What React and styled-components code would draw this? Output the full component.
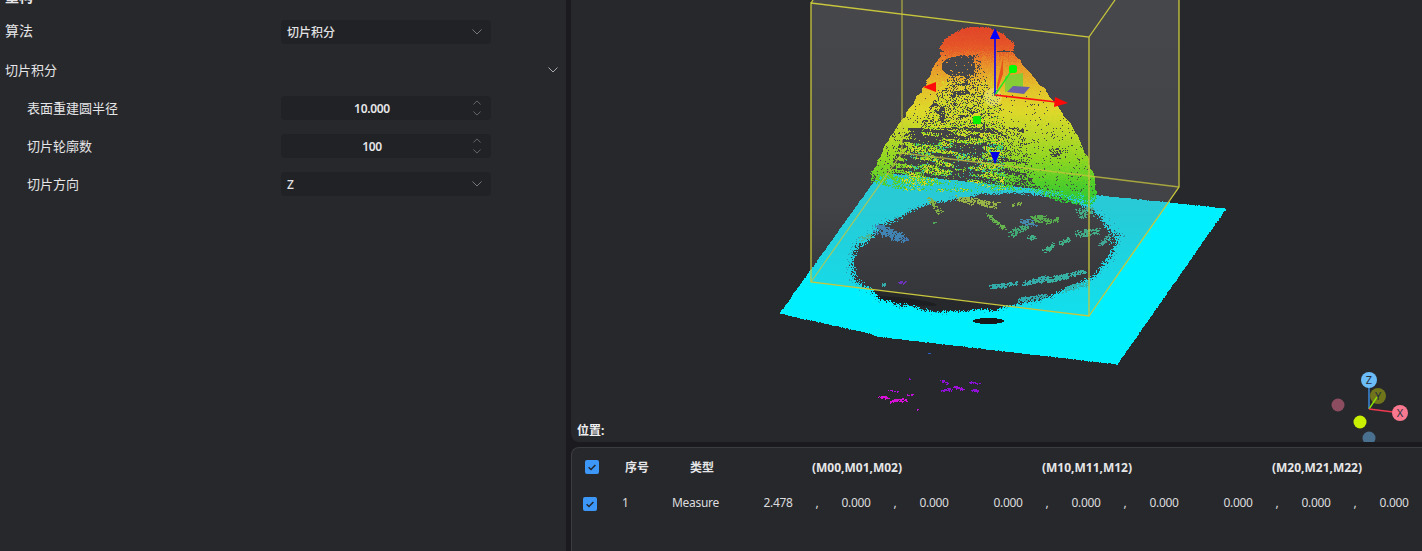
import React from "react";
import styled, { createGlobalStyle } from "styled-components";

const GlobalStyles = createGlobalStyle`
  html, body {
    margin: 0;
    padding: 0;
    background: #1b1b1f;
    overflow: hidden;
  }
  body {
    font-family: "Noto Sans", "Noto Sans CJK SC", sans-serif;
    color: #e4e4e6;
  }
`;

// ---- point cloud generator, seeded so that every run draws the same picture ----

function seeded(a) {
  return () => {
    a = (a + 0x6d2b79f5) | 0;
    let t = Math.imul(a ^ (a >>> 15), 1 | a);
    t = (t + Math.imul(t ^ (t >>> 7), 61 | t)) ^ t;
    return ((t ^ (t >>> 14)) >>> 0) / 4294967296;
  };
}

const hash = (x, y) => {
  const s = Math.sin(x * 127.1 + y * 311.7) * 43758.5453;
  return s - Math.floor(s);
};

function noise(x, y) {
  const ix = Math.floor(x);
  const iy = Math.floor(y);
  const fx = x - ix;
  const fy = y - iy;
  const u = fx * fx * (3 - 2 * fx);
  const v = fy * fy * (3 - 2 * fy);
  const a = hash(ix, iy) * (1 - u) + hash(ix + 1, iy) * u;
  const b = hash(ix, iy + 1) * (1 - u) + hash(ix + 1, iy + 1) * u;
  return a * (1 - v) + b * v;
}

function lerpTable(table, v) {
  if (v <= table[0][0]) return table[0][1];
  for (let i = 1; i < table.length; i++) {
    if (v <= table[i][0]) {
      const [a, av] = table[i - 1];
      const [b, bv] = table[i];
      return av + ((bv - av) * (v - a)) / (b - a);
    }
  }
  return table[table.length - 1][1];
}

function inPolygon(x, y, poly) {
  let inside = false;
  for (let i = 0, j = poly.length - 1; i < poly.length; j = i++) {
    const [xi, yi] = poly[i];
    const [xj, yj] = poly[j];
    if (yi > y !== yj > y && x < ((xj - xi) * (y - yi)) / (yj - yi) + xi) inside = !inside;
  }
  return inside;
}

class Layer {
  constructor() {
    this.byColor = new Map();
  }
  put(x, y, color) {
    if (!this.byColor.has(color)) this.byColor.set(color, new Set());
    this.byColor.get(color).add(Math.round(y) * 4000 + Math.round(x));
  }
  paths() {
    const out = [];
    this.byColor.forEach((set, color) => {
      const keys = Array.from(set).sort((a, b) => a - b);
      let d = "";
      let i = 0;
      while (i < keys.length) {
        let j = i;
        while (j + 1 < keys.length && keys[j + 1] === keys[j] + 1) j++;
        const y = Math.floor(keys[i] / 4000);
        const x = keys[i] - y * 4000;
        d += `M${x} ${y}h${j - i + 1}v1h-${j - i + 1}z`;
        i = j + 1;
      }
      out.push({ color, d });
    });
    return out;
  }
}

const HEIGHT_STOPS = [
  [28, [226, 70, 40]],
  [48, [230, 88, 40]],
  [62, [232, 140, 42]],
  [85, [228, 190, 42]],
  [110, [222, 216, 42]],
  [135, [186, 216, 40]],
  [160, [140, 214, 34]],
  [185, [78, 204, 42]],
  [208, [30, 200, 60]],
];

function heightColor(y) {
  const q = Math.max(28, Math.min(208, Math.round(y / 5) * 5));
  for (let i = 1; i < HEIGHT_STOPS.length; i++) {
    const [a, ca] = HEIGHT_STOPS[i - 1];
    const [b, cb] = HEIGHT_STOPS[i];
    if (q <= b) {
      const t = (q - a) / (b - a);
      const c = ca.map((v, k) => Math.round(v + (cb[k] - v) * t));
      return `rgb(${c[0]},${c[1]},${c[2]})`;
    }
  }
  return "rgb(30,200,60)";
}

const CONE_LEFT = [[52, 941], [87, 923], [110, 908], [147, 883], [173, 871], [190, 872]];
const CONE_RIGHT = [[52, 1013], [100, 1053], [130, 1075], [157, 1087], [175, 1093], [205, 1098]];
const CONE_BOTTOM = [[870, 182], [900, 190], [960, 192], [1030, 190], [1060, 202], [1090, 206], [1100, 194]];
const CAP = [
  [960, 29], [972, 26], [988, 27], [1002, 33], [1014, 43], [1013, 51], [1003, 50], [985, 54],
  [965, 55], [946, 55], [939, 47], [945, 38],
];
const PLATE = [[880, 172], [1226, 208], [1117, 364], [875, 336], [873, 334], [779, 313]];

// island coordinates are read from a 3x crop whose corner is (770,170)
const ISLANDS = [
  [660, 350, 740, 338, 4, "#22b8b4", 110],
  [755, 342, 830, 322, 5, "#22b8b4", 130],
  [830, 330, 895, 315, 5, "#24bfae", 130],
  [905, 312, 945, 302, 4, "#24bfae", 65],
  [880, 358, 950, 338, 5, "#22c0b8", 110],
  [745, 388, 830, 376, 4, "#1fb4b8", 100],
  [650, 130, 700, 175, 3, "#5ecb3a", 70],
  [720, 192, 765, 170, 6, "#2cbb72", 90],
  [752, 152, 792, 160, 6, "#2f8fc0", 60],
  [790, 145, 830, 145, 7, "#48c23a", 90],
  [830, 158, 860, 146, 4, "#48c23a", 40],
  [772, 202, 796, 202, 4, "#2cc08a", 35],
  [822, 242, 852, 222, 4, "#2cc08a", 45],
  [870, 220, 895, 205, 4, "#2cc08a", 40],
  [920, 190, 985, 182, 7, "#2cc08a", 90],
  [925, 130, 960, 125, 9, "#2cc08a", 80],
  [990, 225, 1015, 195, 5, "#2cb8a0", 45],
  [560, 85, 680, 105, 6, "#a6cf2c", 170],
  [475, 85, 510, 130, 5, "#86cc2c", 60],
  [725, 105, 752, 98, 3, "#86cc2c", 22],
  [335, 342, 345, 342, 2, "#22b8b4", 14],
  [270, 205, 305, 195, 4, "#3cc89a", 40],
  [385, 336, 410, 336, 2, "#6a20c8", 20],
  [490, 156, 498, 156, 1, "#3cb848", 6],
];
const BLUE_PATCH = [
  [318, 172, 395, 205, 9, "#2a88c8", 260],
  [400, 205, 415, 208, 3, "#2a70c0", 14],
];
const STRAY = [
  [325, 680, 355, 682, 2, "#d810d8", 30],
  [360, 692, 412, 688, 3, "#d810d8", 55],
  [408, 675, 428, 672, 1, "#c010d8", 10],
  [510, 630, 530, 640, 2, "#9010d8", 20],
  [515, 660, 545, 656, 2, "#9010d8", 24],
  [548, 648, 580, 656, 2, "#a010d8", 28],
  [600, 634, 632, 642, 2, "#8a10d8", 16],
  [605, 660, 625, 660, 2, "#9010d8", 20],
  [355, 660, 380, 662, 1, "#b010d8", 5],
  [475, 548, 478, 550, 1, "#2a60c8", 3],
  [416, 625, 419, 627, 1, "#9010d8", 2],
  [440, 716, 446, 716, 1, "#c010d8", 3],
];

function buildCloud() {
  const rand = seeded(41);
  const plate = new Layer();
  const cone = new Layer();

  // flat table under the object, with the round footprint left empty
  for (let y = 172; y < 366; y++) {
    for (let x = 778; x < 1228; x++) {
      if (!inPolygon(x + (rand() - 0.5) * 0.8, y + (rand() - 0.5) * 0.8, PLATE)) continue;
      const rx = x - 984;
      const ry = y - 252;
      const u = rx * 0.9935 - ry * 0.114;
      const v = rx * 0.114 + ry * 0.9935;
      const wob = (noise(x / 14, y / 14) - 0.5) * 0.06;
      const dist = Math.sqrt((u / 132) ** 2 + (v / 58) ** 2) + wob;
      if (dist < 0.96) continue;
      if (dist < 1.02 && rand() > (dist - 0.96) / 0.06) continue;
      const blackA = ((x - 988) / 16) ** 2 + ((y - 320.5) / 3) ** 2;
      if (blackA < 1) continue;
      plate.put(x, y, dist < 1.05 && rand() < 0.08 ? "#14a8c0" : "#00f0ff");
    }
  }

  const scatter = (layer, list) => {
    list.forEach(([x1, y1, x2, y2, thick, color, count]) => {
      for (let i = 0; i < count; i++) {
        const t = rand();
        const x = 770 + (x1 + (x2 - x1) * t) / 3 + (rand() - 0.5) * thick;
        const y = 170 + (y1 + (y2 - y1) * t) / 3 + (rand() - 0.5) * thick;
        layer.put(x, y, color);
        if (rand() < 0.45) layer.put(x + 1, y, color);
        if (rand() < 0.25) layer.put(x, y + 1, color);
      }
    });
  };
  scatter(plate, ISLANDS);
  scatter(plate, BLUE_PATCH);
  scatter(plate, STRAY);

  // cone of the measured object, drawn pixel by pixel
  for (let y = 27; y < 207; y++) {
    const l = lerpTable(CONE_LEFT, y) + (noise(3, y / 4) - 0.5) * 3;
    const r = lerpTable(CONE_RIGHT, y) + (noise(9, y / 4) - 0.5) * 3;
    for (let x = 868; x < 1102; x++) {
      const jitter = (rand() - 0.5) * 9;
      if (y < 56 && inPolygon(x + (rand() - 0.5) * 1.5, y + (rand() - 0.5) * 1.5, CAP)) {
        cone.put(x, y, heightColor(y + jitter * 0.7));
        continue;
      }
      if (y < 52 || x < l || x > r) continue;
      const bottom = lerpTable(CONE_BOTTOM, x);
      if (y > bottom) continue;

      const t = (x - l) / (r - l);
      const n = noise(x / 6, y / 4);
      const band = noise(x / 15, (y - 0.13 * x) / 3.2);
      let p;
      if (y < 128) {
        if (t < 0.13 + (y < 90 ? 0.06 : 0)) p = 0.98;
        else if (t > 0.62) p = 0.97;
        else if (t > 0.5) p = 0.84;
        else p = n > 0.72 ? 0.1 : 0.74;
      } else {
        if (t < 0.07) p = 0.92;
        else if (t > 0.72) p = 0.95;
        else if (t > 0.52) p = band > 0.68 ? 0.25 : 0.78;
        else p = band > 0.56 ? 0.08 : 0.72;
      }
      if (x > 972 && y < 90 && t > 0.55) p = 1;
      const hollow = ((x - 958) / 17) ** 2 + ((y - 66) / 10) ** 2;
      if (hollow < 1) p = 0.04;
      const spot = ((x - 1055) / 6) ** 2 + ((y - 152) / 5) ** 2;
      if (spot < 1) p = 0.35;
      const fade = (bottom - y) / 12;
      if (fade < 1) p *= 0.45 + 0.55 * fade;
      if (rand() > p) continue;

      let color = heightColor(y + jitter);
      if (t > 0.14 && t < 0.6 && y > 80) {
        const pick = rand();
        if (y > 142 && band > 0.42 && pick < 0.4) color = "#30c8a0";
        else if (pick < 0.45) color = "#d8d62a";
        else if (y > 92 && y < 150 && pick < 0.76) color = heightColor(y + 32);
      }
      cone.put(x, y, color);
    }
  }

  return { plate: plate.paths(), cone: cone.paths() };
}

const CLOUD = buildCloud();

function Pixels({ items }) {
  return items.map((it) => <path key={it.color} d={it.d} fill={it.color} shapeRendering="crispEdges" />);
}

function SceneDrawing() {
  return (
    <SceneSvg viewBox="571 0 851 442" width="851" height="442">
      <defs>
        <linearGradient id="boxShade" x1="0" y1="0" x2="0" y2="316" gradientUnits="userSpaceOnUse">
          <stop offset="0" stopColor="#7a7a7f" stopOpacity="0.38" />
          <stop offset="0.65" stopColor="#7a7a7f" stopOpacity="0.32" />
          <stop offset="1" stopColor="#7a7a7f" stopOpacity="0.14" />
        </linearGradient>
      </defs>

      <ellipse cx="905" cy="301" rx="32" ry="3" fill="#1d1e21" transform="rotate(7 905 301)" />
      <ellipse cx="988" cy="320.5" rx="16" ry="3.5" fill="#17181a" />
      <Pixels items={CLOUD.plate} />
      <polygon points="811,3 813,0 1179,0 1179,187 1089,316 811,282" fill="url(#boxShade)" />
      <Pixels items={CLOUD.cone} />

      {/* bounding box */}
      <g stroke="#c8c63c" strokeWidth="1.3" fill="none">
        <path d="M902 0V153L811 282" opacity="0.75" />
        <path d="M902 153L1179 187" opacity="0.75" />
        <path d="M1179 0V187L1089 316" />
        <path d="M1115 0L1089 37" />
        <path d="M811 3H811L1089 37V316L811 282Z" />
        <path d="M811 3L813 0" />
      </g>

      {/* move / rotate handles */}
      <polygon points="997,85 1003,58 1003,74 997,91" fill="#e84c1a" opacity="0.9" />
      <polygon points="1005,76 1023,73 1023,88 1005,92" fill="#6ed238" opacity="0.8" />
      <polygon points="1007,92 1013,86 1030,87 1024,94" fill="#6a60a8" />
      <circle cx="993" cy="97" r="9" fill="#fffbe0" opacity="0.25" />
      <path d="M995 95V36" stroke="#0000ff" strokeWidth="1.6" />
      <path d="M995 95L1012 70" stroke="#22e822" strokeWidth="1.4" />
      <path d="M995 95L1056 102" stroke="#ff1010" strokeWidth="1.6" />
      <polygon points="995,28 990,39 1000,39" fill="#0000ff" />
      <polygon points="1068,103 1055,97 1054,107" fill="#ff0a0a" />
      <polygon points="923,87 936,82 936,92" fill="#ff0a0a" />
      <polygon points="995,164 990,152 1000,152" fill="#0000e8" />
      <rect x="1009" y="65" width="8" height="8" rx="2.5" fill="#00ff00" />
      <rect x="973" y="116" width="8" height="8" rx="1.5" fill="#00f000" />

      {/* orientation widget */}
      <circle cx="1338" cy="405" r="6.5" fill="#8c4d60" />
      <circle cx="1378" cy="396" r="8" fill="#70751c" />
      <path d="M1369 409V386" stroke="#3d8fe8" strokeWidth="1.4" />
      <path d="M1369 409L1377 397" stroke="#8ce000" strokeWidth="1.4" />
      <path d="M1369 409L1393 412" stroke="#f03850" strokeWidth="1.4" />
      <circle cx="1369" cy="380" r="8" fill="#6cbcf8" />
      <circle cx="1400" cy="413" r="8" fill="#f87890" />
      <circle cx="1360" cy="422" r="6.5" fill="#c8f000" />
      <circle cx="1369" cy="438" r="6.5" fill="#4a7090" />
      <AxisText x="1369" y="384">Z</AxisText>
      <AxisText x="1378" y="400">Y</AxisText>
      <AxisText x="1400" y="417">X</AxisText>
    </SceneSvg>
  );
}

// ---- small icons ----

function Chevron({ up, color = "#77787c", w = 10, h = 6 }) {
  return (
    <svg width={w} height={h} viewBox="0 0 10 6" fill="none">
      <path d={up ? "M.5 5.5L5 1l4.5 4.5" : "M.5 .5L5 5l4.5-4.5"} stroke={color} strokeWidth="1" />
    </svg>
  );
}

function Check({ $shift }) {
  return (
    <CheckBox $shift={$shift}>
      <svg width="14" height="14" viewBox="0 0 14 14" fill="none">
        <path d="M3.6 7.2L6 9.5l4.4-4.6" stroke="#24252a" strokeWidth="1.5" />
      </svg>
    </CheckBox>
  );
}

function Triple({ values }) {
  return (
    <TripleCell>
      <Num>{values[0]}</Num>
      <Comma>,</Comma>
      <Num>{values[1]}</Num>
      <Comma>,</Comma>
      <Num>{values[2]}</Num>
    </TripleCell>
  );
}

export default function App() {
  return (
    <>
      <GlobalStyles />
      <Page>
        <SidePanel>
          <FormList>
            <FormRow>
              <TitleLabel>重构</TitleLabel>
            </FormRow>
            <FormRow>
              <AlgoLabel>算法</AlgoLabel>
              <Select>
                切片积分
                <Chevron />
              </Select>
            </FormRow>
            <SectionRow>
              <Label>切片积分</Label>
              <Chevron color="#a8a9ad" />
            </SectionRow>
            <FormRow>
              <Label $indent>表面重建圆半径</Label>
              <SpinInput>
                <SpinValue>10.000</SpinValue>
                <SpinArrows>
                  <Chevron up w={8} h={5} />
                  <Chevron w={8} h={5} />
                </SpinArrows>
              </SpinInput>
            </FormRow>
            <FormRow>
              <Label $indent>切片轮廓数</Label>
              <SpinInput>
                <SpinValue>100</SpinValue>
                <SpinArrows>
                  <Chevron up w={8} h={5} />
                  <Chevron w={8} h={5} />
                </SpinArrows>
              </SpinInput>
            </FormRow>
            <FormRow>
              <Label $indent>切片方向</Label>
              <Select>
                Z
                <Chevron />
              </Select>
            </FormRow>
          </FormList>
        </SidePanel>

        <RightColumn>
          <Viewport>
            <SceneDrawing />
            <PositionLabel>位置:</PositionLabel>
          </Viewport>
          <TablePanel>
            <HeadRow>
              <Check $shift={2} />
              <HeadCell $pad={3}>序号</HeadCell>
              <HeadCell $pad={18}>类型</HeadCell>
              <MatrixHead>(M00,M01,M02)</MatrixHead>
              <MatrixHead>(M10,M11,M12)</MatrixHead>
              <MatrixHead>(M20,M21,M22)</MatrixHead>
            </HeadRow>
            <DataRow>
              <Check />
              <DataCell>1</DataCell>
              <DataCell>Measure</DataCell>
              <Triple values={["2.478", "0.000", "0.000"]} />
              <Triple values={["0.000", "0.000", "0.000"]} />
              <Triple values={["0.000", "0.000", "0.000"]} />
            </DataRow>
          </TablePanel>
        </RightColumn>
      </Page>
    </>
  );
}

const Page = styled.div`
  display: grid;
  grid-template-columns: 566px 1fr;
  column-gap: 5px;
  width: 1422px;
  height: 551px;
  background: #1b1b1f;
  overflow: hidden;
`;

const SidePanel = styled.aside`
  background: #27282c;
  overflow: hidden;
`;

const FormList = styled.div`
  display: flex;
  flex-direction: column;
  margin-top: -25px;
`;

const FormRow = styled.div`
  display: grid;
  grid-template-columns: 281px 210px;
  align-items: center;
  height: 38px;
`;

const SectionRow = styled.div`
  display: flex;
  align-items: center;
  justify-content: space-between;
  height: 38px;
  padding-right: 8px;
`;

const Label = styled.span`
  padding-left: ${(p) => (p.$indent ? "27px" : "5px")};
  font-size: 13px;
  line-height: 18px;
  color: #e6e6e8;
`;

const TitleLabel = styled(Label)`
  padding-top: 6px;
  font-size: 14px;
  font-weight: 700;
`;

const AlgoLabel = styled(Label)`
  padding-bottom: 2px;
  font-size: 14px;
`;

const Select = styled.div`
  display: flex;
  align-items: center;
  justify-content: space-between;
  height: 24px;
  padding: 0 9px 0 6px;
  border-radius: 4px;
  background: #212226;
  font-size: 12px;
  font-weight: 500;
  color: #e2e2e4;
`;

const SpinInput = styled.div`
  display: flex;
  align-items: center;
  height: 24px;
  border-radius: 4px;
  background: #212226;
`;

const SpinValue = styled.div`
  flex: 1;
  text-align: center;
  font-size: 12px;
  font-weight: 600;
  letter-spacing: -0.3px;
  color: #e6e6e8;
`;

const SpinArrows = styled.div`
  display: flex;
  flex-direction: column;
  align-items: center;
  gap: 6px;
  width: 28px;
`;

const RightColumn = styled.main`
  display: grid;
  grid-template-rows: 442px 1fr;
  row-gap: 5px;
  min-width: 0;
`;

const Viewport = styled.section`
  position: relative;
  background: #27282c;
  border-bottom-left-radius: 8px;
  overflow: hidden;
`;

const SceneSvg = styled.svg`
  display: block;
`;

const AxisText = styled.text`
  font-family: "Noto Sans", sans-serif;
  font-size: 11px;
  fill: #26303a;
  text-anchor: middle;
`;

const PositionLabel = styled.div`
  position: absolute;
  left: 6px;
  bottom: 3px;
  font-size: 12px;
  font-weight: 700;
  line-height: 16px;
  color: #f0f0f2;
`;

const TablePanel = styled.section`
  background: #27282c;
  border: 1px solid #3b3c40;
  border-width: 1px 0 0 1px;
  border-top-left-radius: 8px;
  overflow: hidden;
`;

const tableColumns = `
  display: grid;
  grid-template-columns: 39px 50px 78px 230px 230px 212px;
  align-items: center;
  padding-left: 11px;
`;

const HeadRow = styled.div`
  ${tableColumns}
  height: 38px;
`;

const DataRow = styled.div`
  ${tableColumns}
  height: 36px;
`;

const CheckBox = styled.span`
  display: block;
  width: 14px;
  height: 14px;
  margin-left: ${(p) => p.$shift || 0}px;
  border-radius: 2px;
  background: #3d97f7;
  svg {
    display: block;
  }
`;

const HeadCell = styled.div`
  padding-left: ${(p) => p.$pad || 0}px;
  font-size: 12px;
  font-weight: 700;
  color: #e6e6e8;
`;

const MatrixHead = styled.div`
  width: 212px;
  padding-left: 2px;
  box-sizing: border-box;
  text-align: center;
  font-size: 12px;
  font-weight: 700;
  color: #e6e6e8;
`;

const DataCell = styled.div`
  padding-bottom: 3px;
  font-size: 12px;
  letter-spacing: -0.3px;
  color: #dcdcde;
`;

const TripleCell = styled.div`
  display: flex;
  width: 212px;
  padding-bottom: 3px;
`;

const Num = styled.span`
  width: 56px;
  text-align: center;
  font-size: 12px;
  letter-spacing: -0.3px;
  color: #dcdcde;
`;

const Comma = styled.span`
  width: 22px;
  text-align: center;
  font-size: 12px;
  color: #dcdcde;
`;
